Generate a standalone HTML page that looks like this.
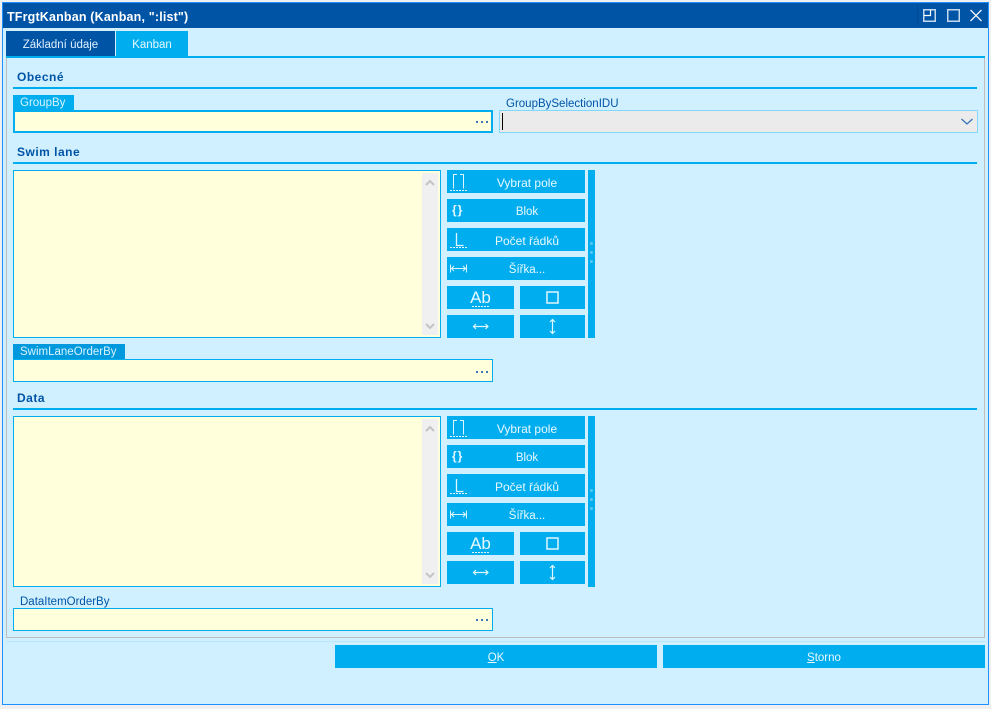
<!DOCTYPE html>
<html><head><meta charset="utf-8">
<style>
html,body{margin:0;padding:0;width:991px;height:709px;overflow:hidden;background:#f0f0f0;font-family:"Liberation Sans",sans-serif;font-size:12px}
div,span,svg{position:absolute;box-sizing:border-box}
u{position:static}
.t{white-space:nowrap;line-height:16px;height:16px}
.h{color:#0054a6;font-weight:bold;font-size:12px;left:17px;letter-spacing:.5px}
.l{background:#00aeef}
.b{background:#00aeef;color:#e8f8ff;text-align:center;line-height:26px;height:23px;white-space:nowrap;font-size:11.5px}
.inp{background:#ffffdc;border:1px solid #00aeef;left:13px;width:480px;height:23px}
.lab{background:#0099dd;color:#d8f3ff;left:13px;height:15px;line-height:17px;padding-left:7px;font-size:11.5px;white-space:nowrap}
.d{width:2px;height:2px;background:#3f78b8}
.br{color:#e8f8ff;font-weight:bold;font-size:12px;letter-spacing:1px;line-height:14px;height:14px;white-space:nowrap}
</style></head><body>
<div style="left:2px;top:2px;width:987px;height:703px;background:#d0f0ff;border:1px solid #1e90ff"></div>
<div style="left:3px;top:3px;width:985px;height:25px;background:#0054a6"></div>
<div class="t" style="left:7px;top:9px;color:#fff;font-weight:bold;font-size:12.5px;letter-spacing:.17px">TFrgtKanban (Kanban, ":list")</div>
<div style="left:917px;top:5px;width:1px;height:21px;background:#004a92"></div>
<svg style="left:920px;top:5px" width="66" height="20" fill="none" stroke="#c4d9ec" stroke-width="1.5">
<rect x="3.75" y="4.75" width="11.5" height="11.5"/><path d="M4 10.500h6.500V5" stroke="#fff" stroke-width="1.200"/>
<rect x="27.75" y="4.75" width="11.5" height="11.5"/>
<path d="M50.500 5l11 11M61.500 5l-11 11" stroke="#eef5fb" stroke-width="1.300"/></svg>

<div style="left:6px;top:31px;width:109px;height:25px;background:#0054a6;color:#e0f0ff;text-align:center;line-height:28px;font-size:11.5px">Základní údaje</div>
<div style="left:116px;top:31px;width:72px;height:25px;background:#00aeef;color:#e8f8ff;text-align:center;line-height:28px;font-size:11.5px">Kanban</div>
<div class="l" style="left:6px;top:56px;width:979px;height:2px"></div>
<div style="left:6px;top:58px;width:1px;height:580px;background:#bdbdbd"></div>
<div style="left:984px;top:58px;width:1px;height:580px;background:#bdbdbd"></div>
<div style="left:6px;top:637px;width:979px;height:1px;background:#bdbdbd"></div>
<div style="left:6px;top:641px;width:979px;height:1px;background:#b8e6fb"></div>

<div class="t h" style="top:69px">Obecné</div>
<div class="l" style="left:13px;top:87px;width:964px;height:2px"></div>
<div class="lab" style="top:95px;width:61px;background:#00aeef">GroupBy</div>
<div class="inp" style="top:110px;border-width:2px"></div>
<div class="d" style="left:476px;top:121px"></div><div class="d" style="left:481px;top:121px"></div><div class="d" style="left:486px;top:121px"></div>
<div class="t" style="left:506px;top:96px;color:#0054a6;font-size:11.5px">GroupBySelectionIDU</div>
<div style="left:499px;top:110px;width:479px;height:23px;background:#ebebeb;border:1px solid #80d8ff"></div>
<div style="left:502px;top:113px;width:1px;height:17px;background:#000"></div>
<svg style="left:960px;top:117px" width="14" height="10" fill="none" stroke="#2f6fb5" stroke-width="1.200"><path d="M1.500 2l5.500 5 5.500-5"/></svg>

<div class="t h" style="top:144px">Swim lane</div>
<div class="l" style="left:13px;top:162px;width:964px;height:2px"></div>

<!-- block 1 -->
<div style="left:13px;top:170px;width:428px;height:168px;background:#ffffdc;border:1px solid #00aeef"></div>
<div style="left:422px;top:173px;width:16px;height:162px;background:#f0f0f0"></div>
<svg style="left:422px;top:173px" width="16" height="162" fill="none" stroke="#c4c4c4" stroke-width="2"><path d="M4 12l4-4 4 4M4 151l4 4 4-4"/></svg>
<div class="b" style="left:447px;top:170px;width:138px;padding-left:22px;font-size:12px">Vybrat pole</div>
<div class="b" style="left:447px;top:199px;width:138px;padding-left:22px">Blok</div>
<div class="b" style="left:447px;top:228px;width:138px;padding-left:22px;font-size:12px">Počet řádků</div>
<div class="b" style="left:447px;top:257px;width:138px;padding-left:22px">Šířka...</div>
<div class="b" style="left:447px;top:286px;width:67px"></div>
<div class="b" style="left:520px;top:286px;width:65px"></div>
<div class="b" style="left:447px;top:315px;width:67px"></div>
<div class="b" style="left:520px;top:315px;width:65px"></div>
<svg style="left:447px;top:170px" width="138" height="168" fill="none" stroke="#dff6ff" stroke-width="1">
<path d="M10 4.500H6.500V18.500M13 4.500h3.500V18.500"/><path d="M3 20.500h17" stroke-dasharray="2 1"/>
<path d="M9.500 63v12.500H16.500" stroke-width="1.300"/><path d="M3 77.500h17" stroke-dasharray="2 1"/>
<path d="M3.500 94.500v8M19.500 94.500v8M4 98.500h15M7 96L4.500 98.500 7 101M16 96l2.500 2.500-2.500 2.500"/>
<rect x="100" y="122" width="11" height="11" stroke-width="1.500"/>
<path d="M26.500 156.500H41M29 154l-2.500 2.500 2.500 2.500M38.500 154l2.500 2.500-2.500 2.500" stroke-width="1.200"/>
<path d="M105.500 149.500v14M103 152l2.500-2.500 2.500 2.500M103 161l2.500 2.500 2.500-2.500" stroke-width="1.200"/>
<path d="M25 136.500h18" stroke-dasharray="2 1"/></svg>
<div class="br" style="left:452px;top:203px">{}</div>
<div class="t" style="left:447px;top:288px;width:67px;text-align:center;color:#e8f8ff;font-size:17px;line-height:20px;height:20px">Ab</div>
<div class="l" style="left:588px;top:170px;width:7px;height:168px"></div>
<div style="left:590px;top:242px;width:3px;height:3px;background:#5cc8f5;border-radius:50%"></div>
<div style="left:590px;top:251px;width:3px;height:3px;background:#5cc8f5;border-radius:50%"></div>
<div style="left:590px;top:260px;width:3px;height:3px;background:#5cc8f5;border-radius:50%"></div>

<div class="lab" style="top:344px;width:112px">SwimLaneOrderBy</div>
<div class="inp" style="top:359px"></div>
<div class="d" style="left:476px;top:371px"></div><div class="d" style="left:481px;top:371px"></div><div class="d" style="left:486px;top:371px"></div>

<div class="t h" style="top:390px">Data</div>
<div class="l" style="left:13px;top:408px;width:964px;height:2px"></div>

<!-- block 2 -->
<div style="left:13px;top:416px;width:428px;height:171px;background:#ffffdc;border:1px solid #00aeef"></div>
<div style="left:422px;top:419px;width:16px;height:165px;background:#f0f0f0"></div>
<svg style="left:422px;top:419px" width="16" height="165" fill="none" stroke="#c4c4c4" stroke-width="2"><path d="M4 12l4-4 4 4M4 154l4 4 4-4"/></svg>
<div class="b" style="left:447px;top:416px;width:138px;padding-left:22px;font-size:12px">Vybrat pole</div>
<div class="b" style="left:447px;top:445px;width:138px;padding-left:22px">Blok</div>
<div class="b" style="left:447px;top:474px;width:138px;padding-left:22px;font-size:12px">Počet řádků</div>
<div class="b" style="left:447px;top:503px;width:138px;padding-left:22px">Šířka...</div>
<div class="b" style="left:447px;top:532px;width:67px"></div>
<div class="b" style="left:520px;top:532px;width:65px"></div>
<div class="b" style="left:447px;top:561px;width:67px"></div>
<div class="b" style="left:520px;top:561px;width:65px"></div>
<svg style="left:447px;top:416px" width="138" height="168" fill="none" stroke="#dff6ff" stroke-width="1">
<path d="M10 4.500H6.500V18.500M13 4.500h3.500V18.500"/><path d="M3 20.500h17" stroke-dasharray="2 1"/>
<path d="M9.500 63v12.500H16.500" stroke-width="1.300"/><path d="M3 77.500h17" stroke-dasharray="2 1"/>
<path d="M3.500 94.500v8M19.500 94.500v8M4 98.500h15M7 96L4.500 98.500 7 101M16 96l2.500 2.500-2.500 2.500"/>
<rect x="100" y="122" width="11" height="11" stroke-width="1.500"/>
<path d="M26.500 156.500H41M29 154l-2.500 2.500 2.500 2.500M38.500 154l2.500 2.500-2.500 2.500" stroke-width="1.200"/>
<path d="M105.500 149.500v14M103 152l2.500-2.500 2.500 2.500M103 161l2.500 2.500 2.500-2.500" stroke-width="1.200"/>
<path d="M25 136.500h18" stroke-dasharray="2 1"/></svg>
<div class="br" style="left:452px;top:449px">{}</div>
<div class="t" style="left:447px;top:534px;width:67px;text-align:center;color:#e8f8ff;font-size:17px;line-height:20px;height:20px">Ab</div>
<div class="l" style="left:588px;top:416px;width:7px;height:171px"></div>
<div style="left:590px;top:489px;width:3px;height:3px;background:#5cc8f5;border-radius:50%"></div>
<div style="left:590px;top:498px;width:3px;height:3px;background:#5cc8f5;border-radius:50%"></div>
<div style="left:590px;top:507px;width:3px;height:3px;background:#5cc8f5;border-radius:50%"></div>

<div class="t" style="left:20px;top:594px;color:#0054a6;font-size:11.5px">DataItemOrderBy</div>
<div class="inp" style="top:608px"></div>
<div class="d" style="left:476px;top:619px"></div><div class="d" style="left:481px;top:619px"></div><div class="d" style="left:486px;top:619px"></div>

<div class="b" style="left:335px;top:645px;width:322px"><u>O</u>K</div>
<div class="b" style="left:663px;top:645px;width:322px"><u>S</u>torno</div>
</body></html>
